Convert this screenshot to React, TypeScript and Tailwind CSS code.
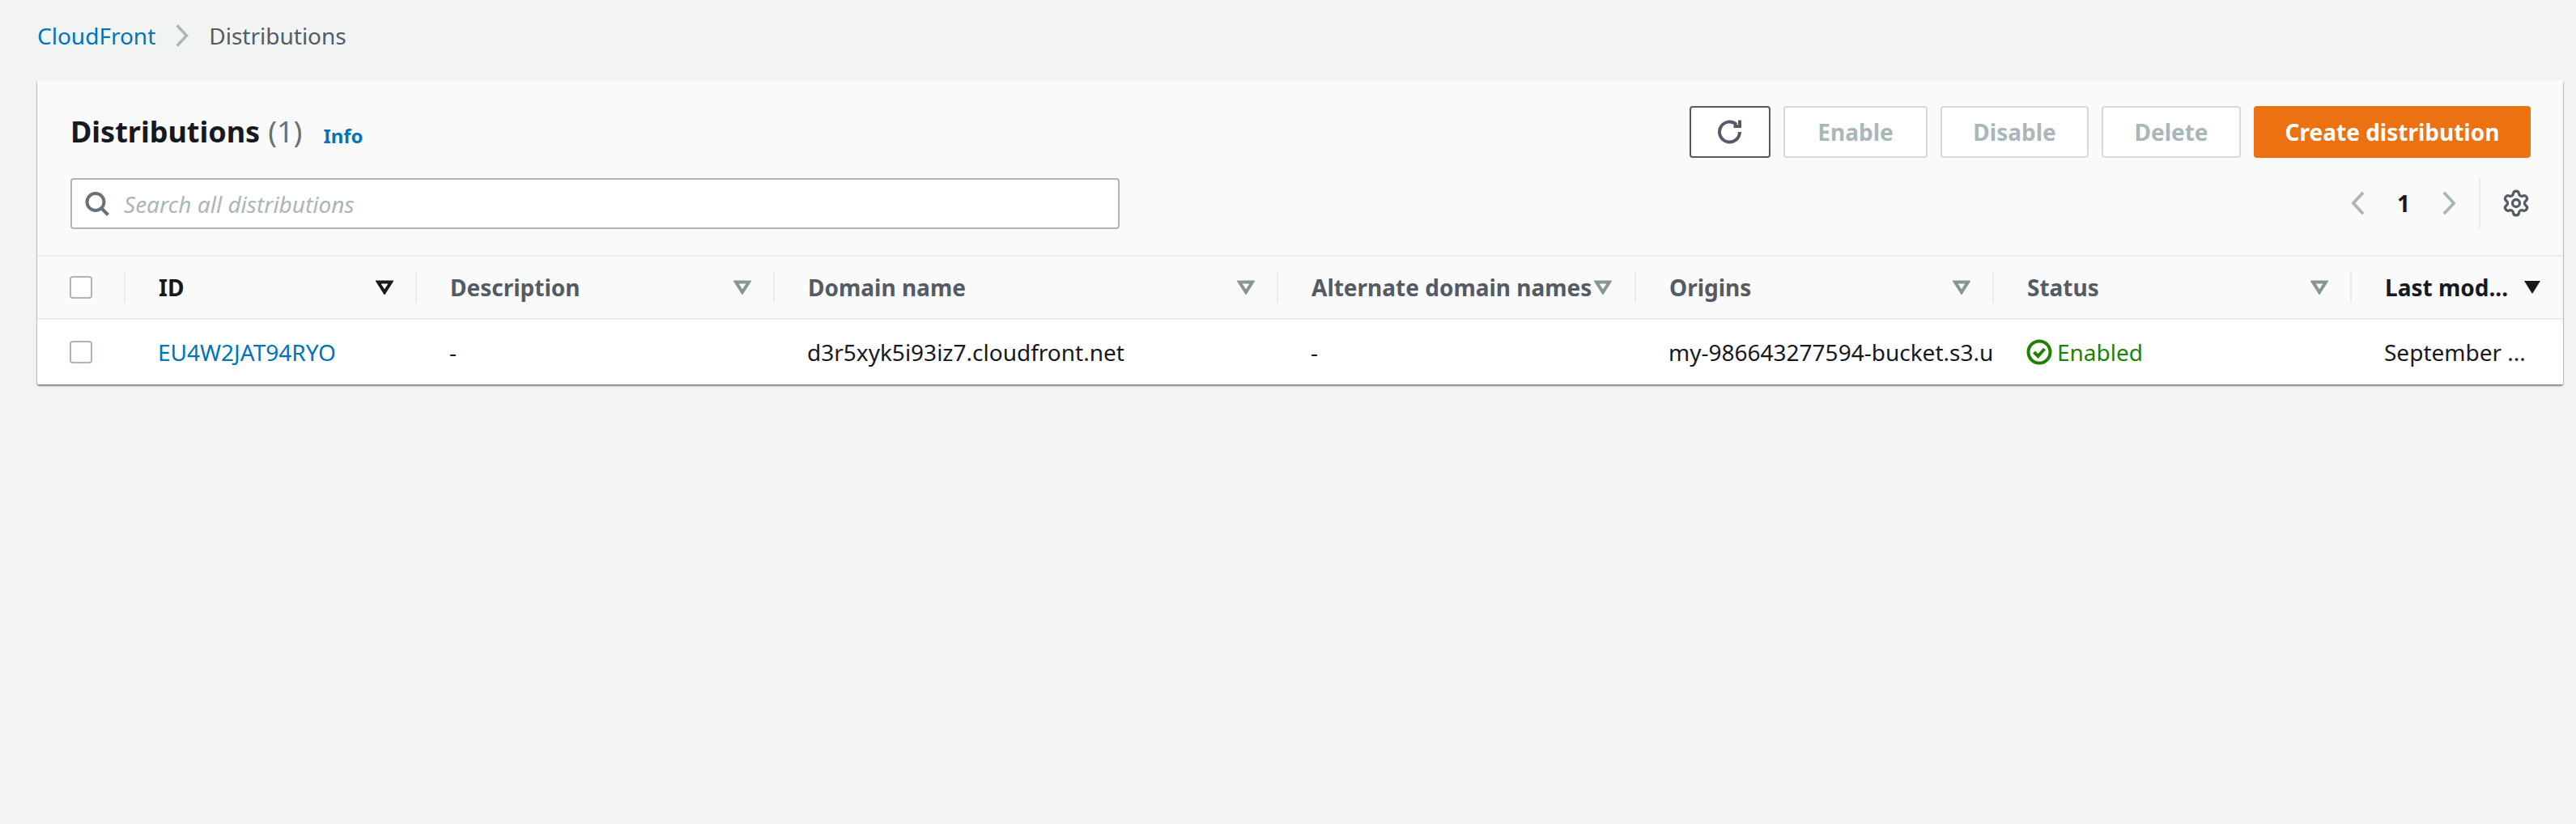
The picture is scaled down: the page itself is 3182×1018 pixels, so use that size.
import { Settings } from "lucide-react"

const columns = [
  { label: "ID", sort: "active" },
  { label: "Description", sort: "idle" },
  { label: "Domain name", sort: "idle" },
  { label: "Alternate domain names", sort: "idle" },
  { label: "Origins", sort: "idle" },
  { label: "Status", sort: "idle" },
  { label: "Last mod...", sort: "desc" },
]

function SortIcon({ kind }: { kind: string }) {
  const color = kind === "idle" ? "#879596" : "#16191f"
  return (
    <svg width="22" height="18" viewBox="0 0 22 18" className="shrink-0">
      {kind === "desc" ? (
        <path d="M1 1h20L11 17z" fill={color} />
      ) : (
        <path d="M3 2.5h16L11 15z" fill="none" stroke={color} strokeWidth="4" strokeLinejoin="miter" />
      )}
    </svg>
  )
}

function Checkbox() {
  return <div className="h-[28px] w-[28px] rounded-[4px] border-2 border-[#aab7b8] bg-white" />
}

function Chevron({ left, className }: { left?: boolean; className: string }) {
  return (
    <svg viewBox="0 0 20 32" className={className} fill="none" stroke="#aab7b8" strokeWidth="4">
      <path d={left ? "M17 2 4 16l13 14" : "M3 2l13 14L3 30"} />
    </svg>
  )
}

function DisabledButton({ label, width }: { label: string; width: string }) {
  return (
    <button className={`h-[64px] rounded-[4px] border-2 border-[#d5dbdb] bg-white text-[28px] font-bold text-[#aab7b8] ${width}`}>
      {label}
    </button>
  )
}

export default function App() {
  return (
    <div className="min-h-[1018px] bg-[#f2f3f3] px-[46px] pr-[16px] font-['Noto_Sans','Open_Sans',sans-serif] text-[28px] text-[#16191f]">
      {/* Breadcrumb */}
      <div className="flex h-[99px] items-start pt-[24px] leading-[40px]">
        <span className="text-[#0073bb]">CloudFront</span>
        <Chevron className="mx-[24px] mt-[5px] h-[30px] w-[18px]" />
        <span className="text-[#545b64]">Distributions</span>
      </div>

      {/* Card */}
      <div className="overflow-hidden rounded-[2px] bg-white shadow-[0_2px_2px_0_rgba(0,28,36,0.4),1px_1px_1px_0_rgba(0,28,36,0.15),-1px_1px_1px_0_rgba(0,28,36,0.15)]">
        <div className="flex h-[218px] justify-between border-b-2 border-[#eaeded] bg-[#fafafa] pl-[41px] pr-[40px]">
          <div className="flex w-[1296px] flex-col">
            <div className="flex h-[121px] items-start pt-[40px]">
              <span className="text-[36px] font-bold leading-[48px]">Distributions</span>
              <span className="ml-[10px] text-[36px] leading-[48px] text-[#687078]">(1)</span>
              <span className="ml-[26px] mt-[13px] text-[24px] font-bold leading-[32px] text-[#0073bb]">Info</span>
            </div>
            <div className="flex h-[63px] items-center rounded-[4px] border-2 border-[#aab7b8] bg-white pl-[16px]">
              <svg width="30" height="30" viewBox="0 0 30 30" fill="none" stroke="#687078" strokeWidth="4">
                <circle cx="13" cy="12.5" r="10.5" />
                <path d="M20 20l8.5 8.5" />
              </svg>
              <span className="ml-[18px] italic text-[#aab7b8]">Search all distributions</span>
            </div>
          </div>

          <div className="flex flex-col items-end pt-[32px]">
            <div className="flex gap-[16px]">
              <button className="flex h-[64px] w-[100px] items-center justify-center rounded-[4px] border-2 border-[#545b64] bg-white">
                <svg width="32" height="32" viewBox="0 0 32 32" fill="none" stroke="#545b64" strokeWidth="4">
                  <path d="M28 16a12.5 12.5 0 1 1-4-9.2" />
                  <path d="M28 1.5V9h-7.5" />
                </svg>
              </button>
              <DisabledButton label="Enable" width="w-[178px]" />
              <DisabledButton label="Disable" width="w-[183px]" />
              <DisabledButton label="Delete" width="w-[172px]" />
              <button className="h-[64px] w-[342px] rounded-[4px] bg-[#ec7211] text-[28px] font-bold text-white">
                Create distribution
              </button>
            </div>
            <div className="mt-[24px] flex h-[63px] items-center">
              <Chevron left className="h-[30px] w-[19px]" />
              <span className="mx-[39px] font-bold leading-none">1</span>
              <Chevron className="h-[30px] w-[19px]" />
              <div className="ml-[27px] flex h-full items-center border-l-2 border-[#eaeded] pl-[26px]">
                <Settings size={36} color="#545b64" strokeWidth={2.2} />
              </div>
            </div>
          </div>
        </div>

        {/* Table */}
        <div className="grid grid-cols-[107px_360px_442px_622px_442px_442px_442px_1fr] border-b-2 border-[#eaeded] bg-[#fafafa]">
          <div className="flex h-[76px] items-center pl-[40px]">
            <Checkbox />
          </div>
          {columns.map((c) => (
            <div key={c.label} className="flex h-[76px] items-center py-[19px]">
              <div className={`flex h-full w-full items-center justify-between border-l-2 border-[#eaeded] pl-[41px] ${c.label === "Alternate domain names" ? "pr-[28px]" : "pr-[27px]"}`}>
                <span className={`whitespace-nowrap font-bold ${c.sort === "idle" ? "text-[#545b64]" : "text-[#16191f]"}`}>{c.label}</span>
                <SortIcon kind={c.sort} />
              </div>
            </div>
          ))}
        </div>
        <div className="grid h-[80px] grid-cols-[107px_360px_442px_622px_442px_442px_442px_1fr] items-center bg-white">
          <div className="pl-[40px]">
            <Checkbox />
          </div>
          <div className="pl-[42px] text-[#0073bb]">EU4W2JAT94RYO</div>
          <div className="pl-[42px]">-</div>
          <div className="pl-[42px]">d3r5xyk5i93iz7.cloudfront.net</div>
          <div className="pl-[42px]">-</div>
          <div className="overflow-hidden whitespace-nowrap pl-[42px]">my-986643277594-bucket.s3.us-east-1.amazonaws.com</div>
          <div className="flex items-center pl-[42px] text-[#1d8102]">
            <svg width="32" height="32" viewBox="0 0 32 32" fill="none" stroke="#1d8102" strokeWidth="4" className="mr-[6px]">
              <circle cx="16" cy="16" r="13.5" />
              <path d="M9.5 16l5 5 8-9" />
            </svg>
            Enabled
          </div>
          <div className="pl-[42px]">September ...</div>
        </div>
      </div>
    </div>
  )
}
